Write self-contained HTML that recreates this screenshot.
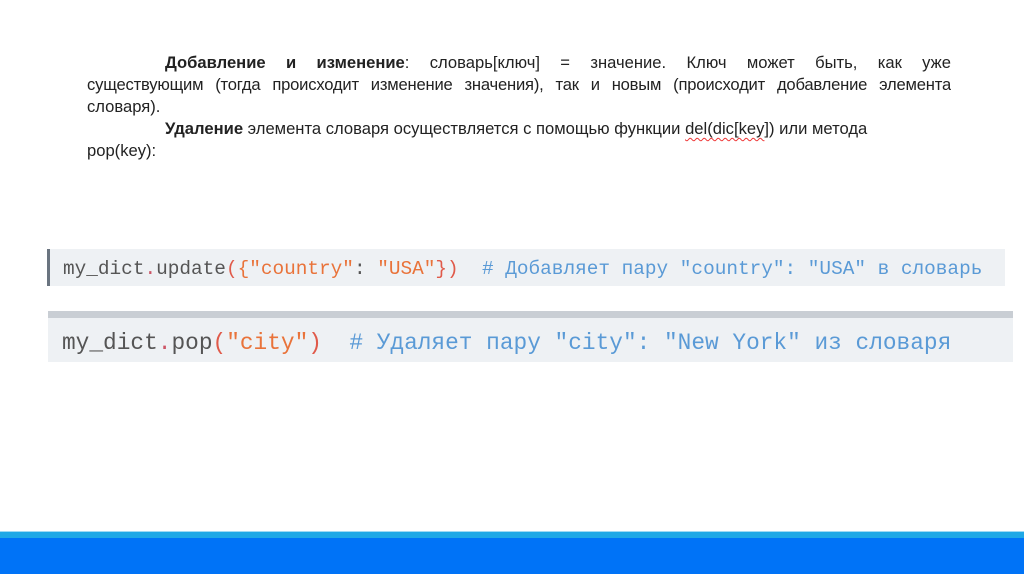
<!DOCTYPE html>
<html><head><meta charset="utf-8"><style>
html,body{margin:0;padding:0;width:1024px;height:574px;overflow:hidden;background:#fff;position:relative;font-family:"Liberation Sans",sans-serif;}
.t{position:absolute;left:87px;width:864px;font-size:16.6px;color:#222;line-height:22px;}
.l{text-align:justify;text-align-last:justify;height:22px;overflow:hidden;white-space:normal}
.n{text-align:left;text-align-last:left;height:22px;white-space:nowrap}
b{font-weight:bold}
.sq{text-decoration:underline wavy #e33;text-decoration-thickness:1px;text-underline-offset:3px}
.c{position:absolute;font-family:"Liberation Mono","DejaVu Sans Mono",monospace;background:#eef1f4;white-space:pre;color:#555}
.k{color:#e9733a}.p{color:#e05a4a}.m{color:#5a9ad6}.d{color:#c56}
</style></head><body>
<div class="t" style="top:52px">
<div class="l" style="padding-left:78px"><b>Добавление и изменение</b>: словарь[ключ] = значение. Ключ может быть, как уже</div>
<div class="l" style="letter-spacing:-0.2px">существующим (тогда происходит изменение значения), так и новым (происходит добавление элемента</div>
<div class="n">словаря).</div>
<div class="n" style="padding-left:78px"><b>Удаление</b> элемента словаря осуществляется с помощью функции <span class="sq">del(dic[key</span>]) или метода</div>
<div class="n">pop(key):</div>
</div>
<div class="c" style="left:47px;top:249px;width:958px;height:37px;border-left:3px solid #6a7480;font-size:19.4px;line-height:41px;padding-left:13px;box-sizing:border-box">my_dict<span class="d">.</span>update<span class="p">(</span><span class="k">{"country"</span>: <span class="k">"USA"</span><span class="p">})</span>  <span class="m"># Добавляет пару "country": "USA" в словарь</span></div>
<div style="position:absolute;left:48px;top:311px;width:965px;height:7px;background:#c9ced4"></div>
<div class="c" style="left:48px;top:318px;width:965px;height:44px;font-size:22.8px;line-height:51px;padding-left:14px;box-sizing:border-box">my_dict<span class="d">.</span>pop<span class="p">(</span><span class="k">"city"</span><span class="p">)</span>  <span class="m"># Удаляет пару "city": "New York" из словаря</span></div>
<div style="position:absolute;left:0;top:531px;width:1024px;height:7px;background:#1fa8e6;border-top:1px solid #9fdaf4;box-sizing:border-box"></div>
<div style="position:absolute;left:0;top:538px;width:1024px;height:36px;background:#0073f7"></div>
</body></html>
